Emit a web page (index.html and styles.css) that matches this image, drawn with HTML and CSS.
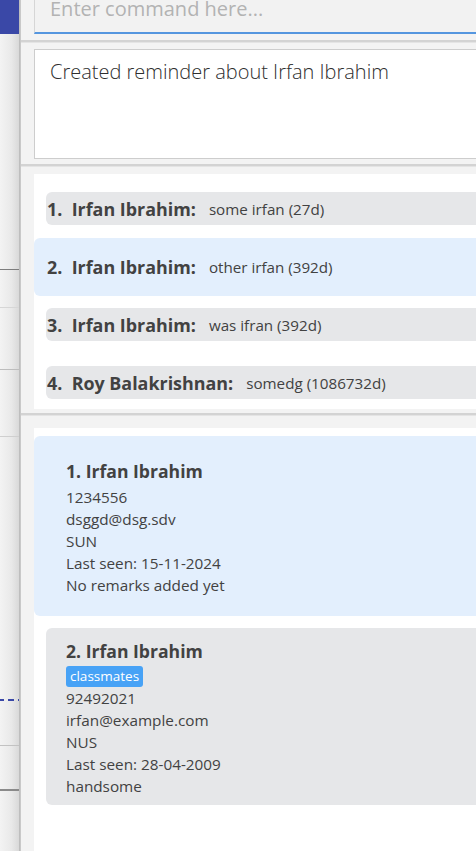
FILE: index.html
```html
<!DOCTYPE html>
<html>
<head>
<meta charset="utf-8">
<link rel="stylesheet" href="styles.css">
</head>
<body>
<div class="screen">
  <div class="bg-window">
    <div class="bg-header"></div>
    <div class="bg-body">
      <div class="bg-row r1"></div>
      <div class="bg-row r2"></div>
      <div class="bg-row r3"></div>
      <div class="bg-row r4"></div>
      <div class="bg-row r5"></div>
      <div class="bg-row r6"></div>
      <div class="bg-row r7"></div>
    </div>
  </div>
  <div class="win-edge"></div>
  <div class="app">
    <div class="command"><span class="placeholder">Enter command here...</span></div>
    <div class="splitter"></div>
    <div class="result">Created reminder about Irfan Ibrahim</div>
    <div class="splitter s2"></div>
    <div class="reminders">
      <div class="rcell"><div class="rbar"><span class="rtitle">1.&nbsp; Irfan Ibrahim:</span><span class="rdesc">some irfan (27d)</span></div></div>
      <div class="rcell selected"><div class="rbar"><span class="rtitle">2.&nbsp; Irfan Ibrahim:</span><span class="rdesc">other irfan (392d)</span></div></div>
      <div class="rcell"><div class="rbar"><span class="rtitle">3.&nbsp; Irfan Ibrahim:</span><span class="rdesc">was ifran (392d)</span></div></div>
      <div class="rcell"><div class="rbar"><span class="rtitle">4.&nbsp; Roy Balakrishnan:</span><span class="rdesc">somedg (1086732d)</span></div></div>
    </div>
    <div class="splitter s3"></div>
    <div class="persons">
      <div class="pcell selected">
        <div class="card">
          <div class="ptitle">1. Irfan Ibrahim</div>
          <div class="pline">1234556</div>
          <div class="pline">dsggd@dsg.sdv</div>
          <div class="pline">SUN</div>
          <div class="pline">Last seen: 15-11-2024</div>
          <div class="pline">No remarks added yet</div>
        </div>
      </div>
      <div class="pcell">
        <div class="card">
          <div class="ptitle">2. Irfan Ibrahim</div>
          <div class="tags"><span class="tag">classmates</span></div>
          <div class="pline">92492021</div>
          <div class="pline">irfan@example.com</div>
          <div class="pline">NUS</div>
          <div class="pline">Last seen: 28-04-2009</div>
          <div class="pline">handsome</div>
        </div>
      </div>
    </div>
  </div>
</div>
</body>
</html>
```
FILE: styles.css
```css
* { box-sizing: border-box; }
html, body {
  margin: 0;
  padding: 0;
  width: 476px;
  height: 851px;
  overflow: hidden;
  background: #f3f3f3;
  font-family: "Open Sans", "Noto Sans", sans-serif;
}
.screen {
  display: flex;
  height: 851px;
}
.bg-window {
  width: 19px;
  display: flex;
  flex-direction: column;
}
.bg-header {
  height: 34px;
  background: #3a48a7;
}
.bg-body {
  flex: 1;
  background: linear-gradient(to right, #f3f3f3, #e9e9e9 60%, #d9d9d9);
  display: flex;
  flex-direction: column;
}
.bg-row { flex: none; }
.r1 { height: 236px; border-bottom: 1px solid #7d7d7d; }
.r2 { height: 38px; border-bottom: 1px solid #d6d6d6; }
.r3 { height: 62px; border-bottom: 1px solid #bdbdbd; }
.r4 { height: 67px; border-bottom: 1px solid #cfcfcf; }
.r5 { height: 264px; border-bottom: 2px dashed #3a48a7; border-image: repeating-linear-gradient(to right, #3a48a7 0 5px, transparent 5px 8px) 2; }
.r6 { height: 45px; border-bottom: 1px solid #c2c2c2; }
.r7 { height: 45px; border-bottom: 2px solid #8a8a8a; }
.win-edge {
  width: 2px;
  background: linear-gradient(to right, #b8b8b8, #cfcfcf);
}
.app {
  flex: 1;
  min-width: 0;
  display: flex;
  flex-direction: column;
  padding-left: 13px;
  overflow: hidden;
}
.command {
  height: 34px;
  flex: none;
  border-left: 1px solid #d6d6d6;
  border-bottom: 2px solid #5596df;
  background: #f2f2f2;
  padding-left: 15px;
  display: flex;
  align-items: flex-start;
  overflow: hidden;
}
.placeholder {
  color: #b3b3b3;
  font-size: 20px;
  line-height: 17px;
  padding-top: 0;
  white-space: nowrap;
}
.splitter {
  height: 3px;
  margin: 6px 0 6px -13px;
  background: #d3d3d3;
  border-bottom: 1px solid #e4e4e4;
  flex: none;
}
.result {
  height: 110px;
  flex: none;
  background: #fff;
  border: 1px solid #cdcdcd;
  border-right: none;
  padding: 8px 0 0 15px;
  font-size: 20px;
  font-weight: 300;
  color: #2e2e2e;
  line-height: 28px;
  white-space: nowrap;
}
.s2 { margin-top: 5px; margin-bottom: 7px; }
.reminders {
  height: 235px;
  background: #fff;
  padding-top: 6px;
  overflow: hidden;
  flex: none;
}
.rcell {
  height: 58px;
  padding: 12px 0 13px 12px;
}
.rcell.selected {
  background: #e3effd;
  border-radius: 6px 0 0 6px;
}
.rbar {
  height: 33px;
  background: #e6e7e9;
  border-radius: 6px 0 0 6px;
  display: flex;
  align-items: center;
  padding-left: 1px;
  white-space: nowrap;
  color: #424242;
}
.rcell.selected .rbar { background: transparent; }
.rtitle {
  font-size: 17.9px;
  font-weight: 700;
  margin-right: 13px;
}
.rdesc {
  font-size: 15.2px;
}
.s3 { margin-top: 4px; margin-bottom: 12px; }
.persons {
  flex: 1;
  background: #fff;
  padding-top: 8px;
}
.pcell {
  padding: 12px 0 12px 12px;
}
.pcell.selected {
  background: #e3effd;
  border-radius: 6px 0 0 6px;
}
.card {
  background: #e6e7e9;
  border-radius: 6px 0 0 6px;
  padding: 9px 0 8px 20px;
  color: #424242;
}
.pcell.selected .card { background: transparent; }
.ptitle {
  font-size: 17.6px;
  font-weight: 700;
  line-height: 29px;
}
.pline {
  font-size: 15.3px;
  line-height: 22px;
  white-space: nowrap;
}
.tags {
  height: 21px;
  display: flex;
  align-items: center;
}
.tag {
  background: #47a2f6;
  color: #fff;
  font-size: 13.5px;
  line-height: 21px;
  height: 21px;
  padding: 0 4px;
  border-radius: 3px;
}
```
